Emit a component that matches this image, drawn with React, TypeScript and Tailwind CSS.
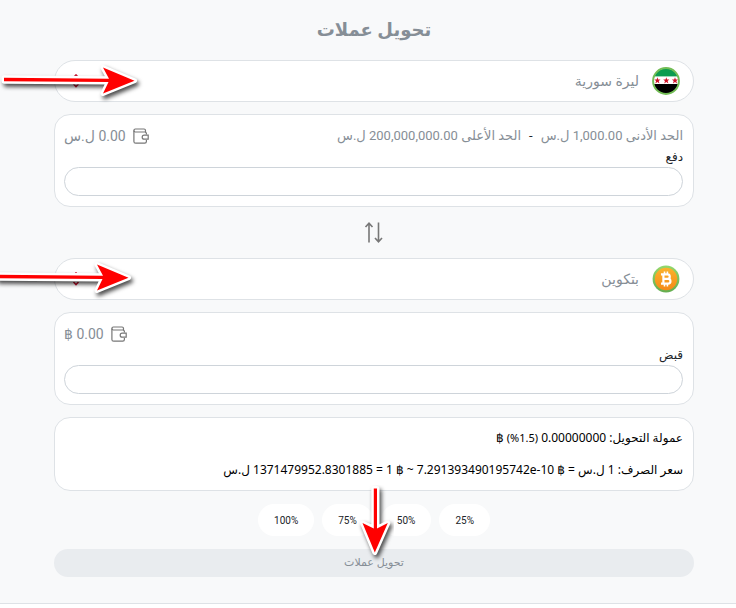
import type { ReactNode } from 'react';

const percents = ['25%', '50%', '75%', '100%'];

function SyriaFlag() {
  return (
    <svg viewBox="0 0 28 28" className="w-7 h-7 shrink-0" aria-hidden="true">
      <clipPath id="flag-clip">
        <circle cx="14" cy="14" r="12.6" />
      </clipPath>
      <g clipPath="url(#flag-clip)">
        <rect width="28" height="28" fill="#fff" />
        <rect width="28" height="9.4" fill="#0b9c50" />
        <rect y="17" width="28" height="11" fill="#000" />
        {[5.4, 14.3, 23].map(x => (
          <path
            key={x}
            transform={`translate(${x} 13.4)`}
            fill="#ce1126"
            d="M0-3.200.8-.9h2.300L1.300.6l.8 2.400L0 1.500l-2.100 1.500.8-2.400L-3.100-.9h2.300z"
          />
        ))}
      </g>
      <circle cx="14" cy="14" r="12.9" fill="none" stroke="#72bd55" strokeWidth="2" />
    </svg>
  );
}

function BitcoinIcon() {
  return (
    <svg viewBox="0 0 28 28" className="w-7 h-7 shrink-0" aria-hidden="true">
      <defs>
        <linearGradient id="btc-ring" x1="0" y1="0" x2="0" y2="1">
          <stop offset="0" stopColor="#93d86c" />
          <stop offset="1" stopColor="#64ad50" />
        </linearGradient>
        <linearGradient id="btc-fill" x1="0" y1="0" x2="0" y2="1">
          <stop offset="0" stopColor="#fbb32c" />
          <stop offset="1" stopColor="#f58a18" />
        </linearGradient>
      </defs>
      <circle cx="14" cy="14" r="13.4" fill="url(#btc-ring)" />
      <circle cx="14" cy="14" r="11.2" fill="url(#btc-fill)" />
      <g fill="none" stroke="#fff">
        <path strokeWidth="2.2" d="M9 9.400h6.500a2.200 2.200 0 0 1 0 4.500h-4M9 18.600h7.100a2.300 2.300 0 0 0 0-4.700h-4.600M11.400 9.400v9.200" />
        <path strokeWidth="1.6" d="M12.500 6.600v2.800M15.400 6.600v2.800M12.500 18.600v2.800M15.400 18.600v2.800" />
      </g>
    </svg>
  );
}

function WalletIcon() {
  return (
    <svg viewBox="0 0 16 16" className="w-4 h-4 shrink-0" fill="none" stroke="#777" strokeWidth="1.2" aria-hidden="true">
      <path d="M13.4 6.4V5.6a1.6 1.6 0 0 0-1.6-1.6H2.2A1.4 1.4 0 0 1 .9 2.6 1.6 1.6 0 0 1 2.4 1H11a1.6 1.6 0 0 1 1.5 1.6V4" />
      <path d="M.9 2.6v10.8A1.8 1.8 0 0 0 2.7 15.2h9a1.8 1.8 0 0 0 1.7-1.8v-1.5" />
      <path d="M15.2 7.2h-4a2 2 0 0 0 0 4h4z" />
    </svg>
  );
}

// red pointer with a white outline, drawn pointing right
function Pointer({ className }: { className: string }) {
  return (
    <svg viewBox="0 0 144 44" className={`absolute w-36 h-11 pointer-events-none z-10 ${className}`} aria-hidden="true">
      <path
        d="M4 18.800 109 19.700 103 8.500 134.500 21.800 103 34.500 108.500 23 4 22.300z"
        fill="#f00"
        stroke="#fff"
        strokeWidth="5"
        strokeLinejoin="round"
        style={{ paintOrder: 'stroke', filter: 'drop-shadow(2px 3px 2px rgba(0,0,0,0.7))' }}
      />
    </svg>
  );
}

function DownPointer() {
  return (
    <svg viewBox="0 0 40 80" className="absolute left-1/2 -translate-x-1/2 bottom-3 w-10 h-20 pointer-events-none z-10" aria-hidden="true">
      <path
        d="M19.800 3.500h3.200V43.500L33.800 38 20.800 67.500 8.500 38 19.800 43.500z"
        fill="#f00"
        stroke="#fff"
        strokeWidth="5"
        strokeLinejoin="round"
        style={{ paintOrder: 'stroke', filter: 'drop-shadow(2px 3px 2px rgba(0,0,0,0.7))' }}
      />
    </svg>
  );
}

type CurrencySelectProps = { label: string; name: string; icon: ReactNode; pointer: string };

function CurrencySelect({ label, name, icon, pointer }: CurrencySelectProps) {
  return (
    <div className="relative flex items-center h-[42px] bg-white border border-[#dee2e6] rounded-full pr-[13px] pl-4">
      {icon}
      <select aria-label={label} className="flex-1 h-full appearance-none bg-transparent pr-[13px] text-sm text-[#868e96] outline-none">
        <option>{name}</option>
      </select>
      <svg viewBox="0 0 10 14" className="w-[10px] h-[14px]" fill="none" stroke="#c8102e" strokeWidth="1.6" aria-hidden="true">
        <path d="M2.500 3.500 5 1 7.500 3.500M2.500 10 5 12.500 7.500 10" />
      </svg>
      <Pointer className={pointer} />
    </div>
  );
}

type AmountCardProps = { id: string; label: string; balance: string; limits?: ReactNode };

function AmountCard({ id, label, balance, limits }: AmountCardProps) {
  return (
    <div className="bg-white border border-[#dee2e6] rounded-2xl pl-[9px] pr-[10px] pt-[9px] pb-[10px]">
      <div className="flex items-center h-6 text-[#868e96]">
        <div className="flex gap-2 text-[13px] whitespace-nowrap">{limits}</div>
        <div className="flex items-center gap-[7px] mr-auto text-sm whitespace-nowrap">
          <WalletIcon />
          <span>{balance}</span>
        </div>
      </div>
      <label htmlFor={id} className="block h-[19px] text-xs leading-[19px] text-[#212529]">{label}</label>
      <input id={id} type="text" className="block w-full h-[29px] border border-[#ced4da] rounded-full px-3 text-sm outline-none" />
    </div>
  );
}

export default function App() {
  return (
    <div dir="rtl" className="bg-white pb-1 font-['Roboto','DejaVu_Sans',sans-serif]">
      <main className="bg-[#f8f9fa] border-b border-[#dee2e6] pt-3 pb-[26px] pl-[54px] pr-[42px] overflow-hidden">
        <h1 className="h-9 mb-3 text-center text-lg leading-9 font-bold text-[#868e96]">تحويل عملات</h1>

        <CurrencySelect label="دفع" name="ليرة سورية" icon={<SyriaFlag />} pointer="-left-[55px] -top-[2px]" />
        <div className="h-3" />
        <AmountCard
          id="pay"
          label="دفع"
          balance="0.00 ل.س"
          limits={
            <>
              <span>الحد الأدنى 1,000.00 ل.س</span>
              <span className="text-[#212529]">-</span>
              <span>الحد الأعلى 200,000,000.00 ل.س</span>
            </>
          }
        />

        <button type="button" aria-label="تحويل" className="flex items-center justify-center w-full h-[51px]">
          <svg viewBox="0 0 20 22" className="w-5 h-[22px]" fill="none" stroke="#777" strokeWidth="1.6" aria-hidden="true">
            <path d="M5 20.500V1.500M1.500 5 5 1.200 8.500 5M14.500 .5v19M11 16 14.500 19.800l3.500-3.800" />
          </svg>
        </button>

        <CurrencySelect label="قبض" name="بتكوين" icon={<BitcoinIcon />} pointer="-left-[61px] -top-[3px]" />
        <div className="h-3" />
        <AmountCard id="receive" label="قبض" balance="0.00 ฿" />

        <div className="flex flex-col justify-between h-[74px] mt-3 bg-white border border-[#dee2e6] rounded-2xl px-[10px] py-[10px] text-xs leading-5 text-black whitespace-nowrap font-['Noto_Sans','DejaVu_Sans',sans-serif]">
          <p>
            عمولة التحويل: 0.00000000 <bdi dir="ltr" className="text-[11px]">(%1.5)</bdi> ฿
          </p>
          <p>
            سعر الصرف: 1 ل.س = <bdi dir="ltr">7.291393490195742e-10 ฿</bdi> ~ <bdi dir="ltr">1 ฿</bdi> = 1371479952.8301885 ل.س
          </p>
        </div>

        <div className="flex justify-center gap-2 mt-[13px]">
          {percents.map(p => (
            <button key={p} type="button" dir="ltr" className="h-8 px-4 bg-white rounded-full text-[10px] text-[#212529]">
              {p}
            </button>
          ))}
        </div>

        <div className="relative mt-[13px]">
          <button type="button" className="block w-full h-7 bg-[#e9ecef] rounded-full text-[11px] text-[#868e96]">
            تحويل عملات
          </button>
          <DownPointer />
        </div>
      </main>
    </div>
  );
}
